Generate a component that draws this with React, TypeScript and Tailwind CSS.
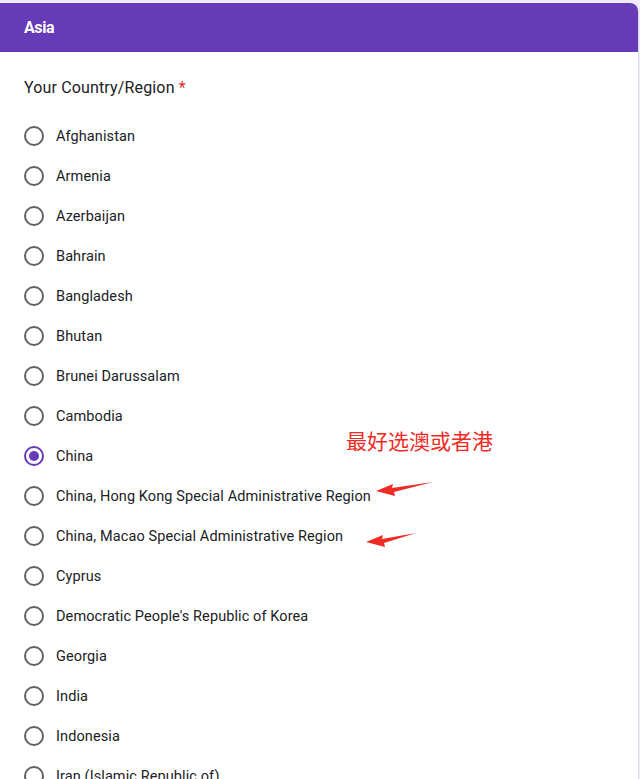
import React from 'react'

const countries = [
    'Afghanistan',
    'Armenia',
    'Azerbaijan',
    'Bahrain',
    'Bangladesh',
    'Bhutan',
    'Brunei Darussalam',
    'Cambodia',
    'China',
    'China, Hong Kong Special Administrative Region',
    'China, Macao Special Administrative Region',
    'Cyprus',
    "Democratic People's Republic of Korea",
    'Georgia',
    'India',
    'Indonesia',
    'Iran (Islamic Republic of)',
    'Iraq',
]

function Radio({ checked }: { checked: boolean }) {
    return (
        <span
            className={`w-5 h-5 rounded-full border-2 flex items-center justify-center shrink-0 ${checked ? 'border-[#673ab7]' : 'border-[#5f6368]'}`}
        >
            {checked && <span className="w-2.5 h-2.5 rounded-full bg-[#673ab7]" />}
        </span>
    )
}

export default function App() {
    return (
        <div className="h-[779px] overflow-hidden bg-[#f0ebf8] pt-[3px] font-['Roboto',sans-serif] text-[#202124]">
            <div className="relative w-[639px] h-[900px] bg-white rounded-tr-lg border-r border-[#dadce0]">
                {/* Section header */}
                <div className="h-[49px] bg-[#673ab7] rounded-tr-lg flex items-center px-6">
                    <h1 className="text-white font-bold text-[16px] tracking-[-0.4px]">Asia</h1>
                </div>

                {/* Question */}
                <div className="px-6 pt-[24px]">
                    <p className="text-[16px] leading-6 tracking-[0.15px]">
                        Your Country/Region <span className="text-[#d93025]">*</span>
                    </p>
                    <ul className="mt-4">
                        {countries.map((c) => (
                            <li key={c} className="h-10 flex items-center gap-3">
                                <Radio checked={c === 'China'} />
                                <span className="text-[14.5px] tracking-[0.1px] pt-[2px]">{c}</span>
                            </li>
                        ))}
                    </ul>
                </div>

                {/* Annotation */}
                <div className="absolute left-[346px] top-[421px] text-[#ee2b24] text-[21px] leading-8 font-['Noto_Sans_CJK_SC',sans-serif]">
                    最好选澳或者港
                </div>
                <svg className="absolute left-0 top-0" width="640" height="779" viewBox="0 0 640 779">
                    <g fill="#ee2b24">
                        <path d="M433 479 L392 485 L393 481 L376 488 L395 493 L394 489 Z" />
                        <path d="M416 530 L382 536 L383 532 L366 539 L385 544 L384 540 Z" />
                    </g>
                </svg>
            </div>
        </div>
    )
}
